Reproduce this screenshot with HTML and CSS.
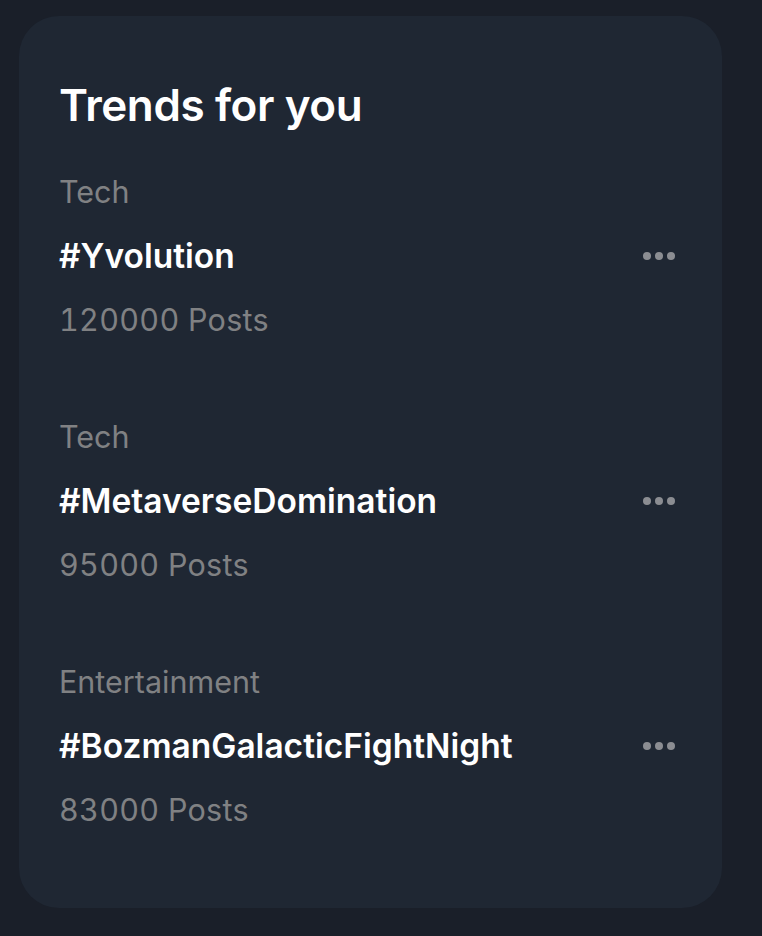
FILE: index.html
```html
<!DOCTYPE html>
<html>
<head>
<meta charset="utf-8">
<link rel="stylesheet" href="styles.css">
</head>
<body>
<div class="page">
  <section class="card">
    <h2 class="heading">Trends for you</h2>
    <ul class="trends">
      <li class="trend">
        <div class="info">
          <div class="category">Tech</div>
          <div class="tag">#Yvolution</div>
          <div class="count">120000 Posts</div>
        </div>
        <button class="more" aria-label="More"><span></span><span></span><span></span></button>
      </li>
      <li class="trend">
        <div class="info">
          <div class="category">Tech</div>
          <div class="tag">#MetaverseDomination</div>
          <div class="count">95000 Posts</div>
        </div>
        <button class="more" aria-label="More"><span></span><span></span><span></span></button>
      </li>
      <li class="trend">
        <div class="info">
          <div class="category">Entertainment</div>
          <div class="tag">#BozmanGalacticFightNight</div>
          <div class="count">83000 Posts</div>
        </div>
        <button class="more" aria-label="More"><span></span><span></span><span></span></button>
      </li>
    </ul>
  </section>
</div>
</body>
</html>
```
FILE: styles.css
```css
* { box-sizing: border-box; }
html, body {
  margin: 0;
  padding: 0;
  background: #1a1f29;
  height: 100%;
}
body {
  font-family: Inter, "Noto Sans", sans-serif;
  color: #ffffff;
}
.page {
  padding: 16px 40px 28px 19px;
}
.card {
  background: #1f2733;
  border-radius: 40px;
  height: 892px;
  padding: 63px 47px 0 40px;
}
.heading {
  margin: 0;
  font-size: 44px;
  font-weight: 560;
  line-height: 52px;
  letter-spacing: -0.4px;
}
.trends {
  list-style: none;
  margin: 29px 0 0;
  padding: 0;
  display: flex;
  flex-direction: column;
}
.trend {
  display: flex;
  justify-content: space-between;
  align-items: flex-start;
  height: 245px;
}
.category, .count {
  color: #808183;
  font-size: 30.5px;
  line-height: 64px;
}
.count {
  font-feature-settings: "tnum" 1;
  letter-spacing: 0.3px;
}
.tag {
  font-size: 33.5px;
  font-weight: 580;
  line-height: 64px;
}
.more {
  margin-top: 64px;
  height: 64px;
  border: 0;
  padding: 0;
  background: transparent;
  display: flex;
  align-items: center;
  gap: 4px;
}
.more span {
  width: 8px;
  height: 8px;
  border-radius: 50%;
  background: #8b8d92;
}
```
